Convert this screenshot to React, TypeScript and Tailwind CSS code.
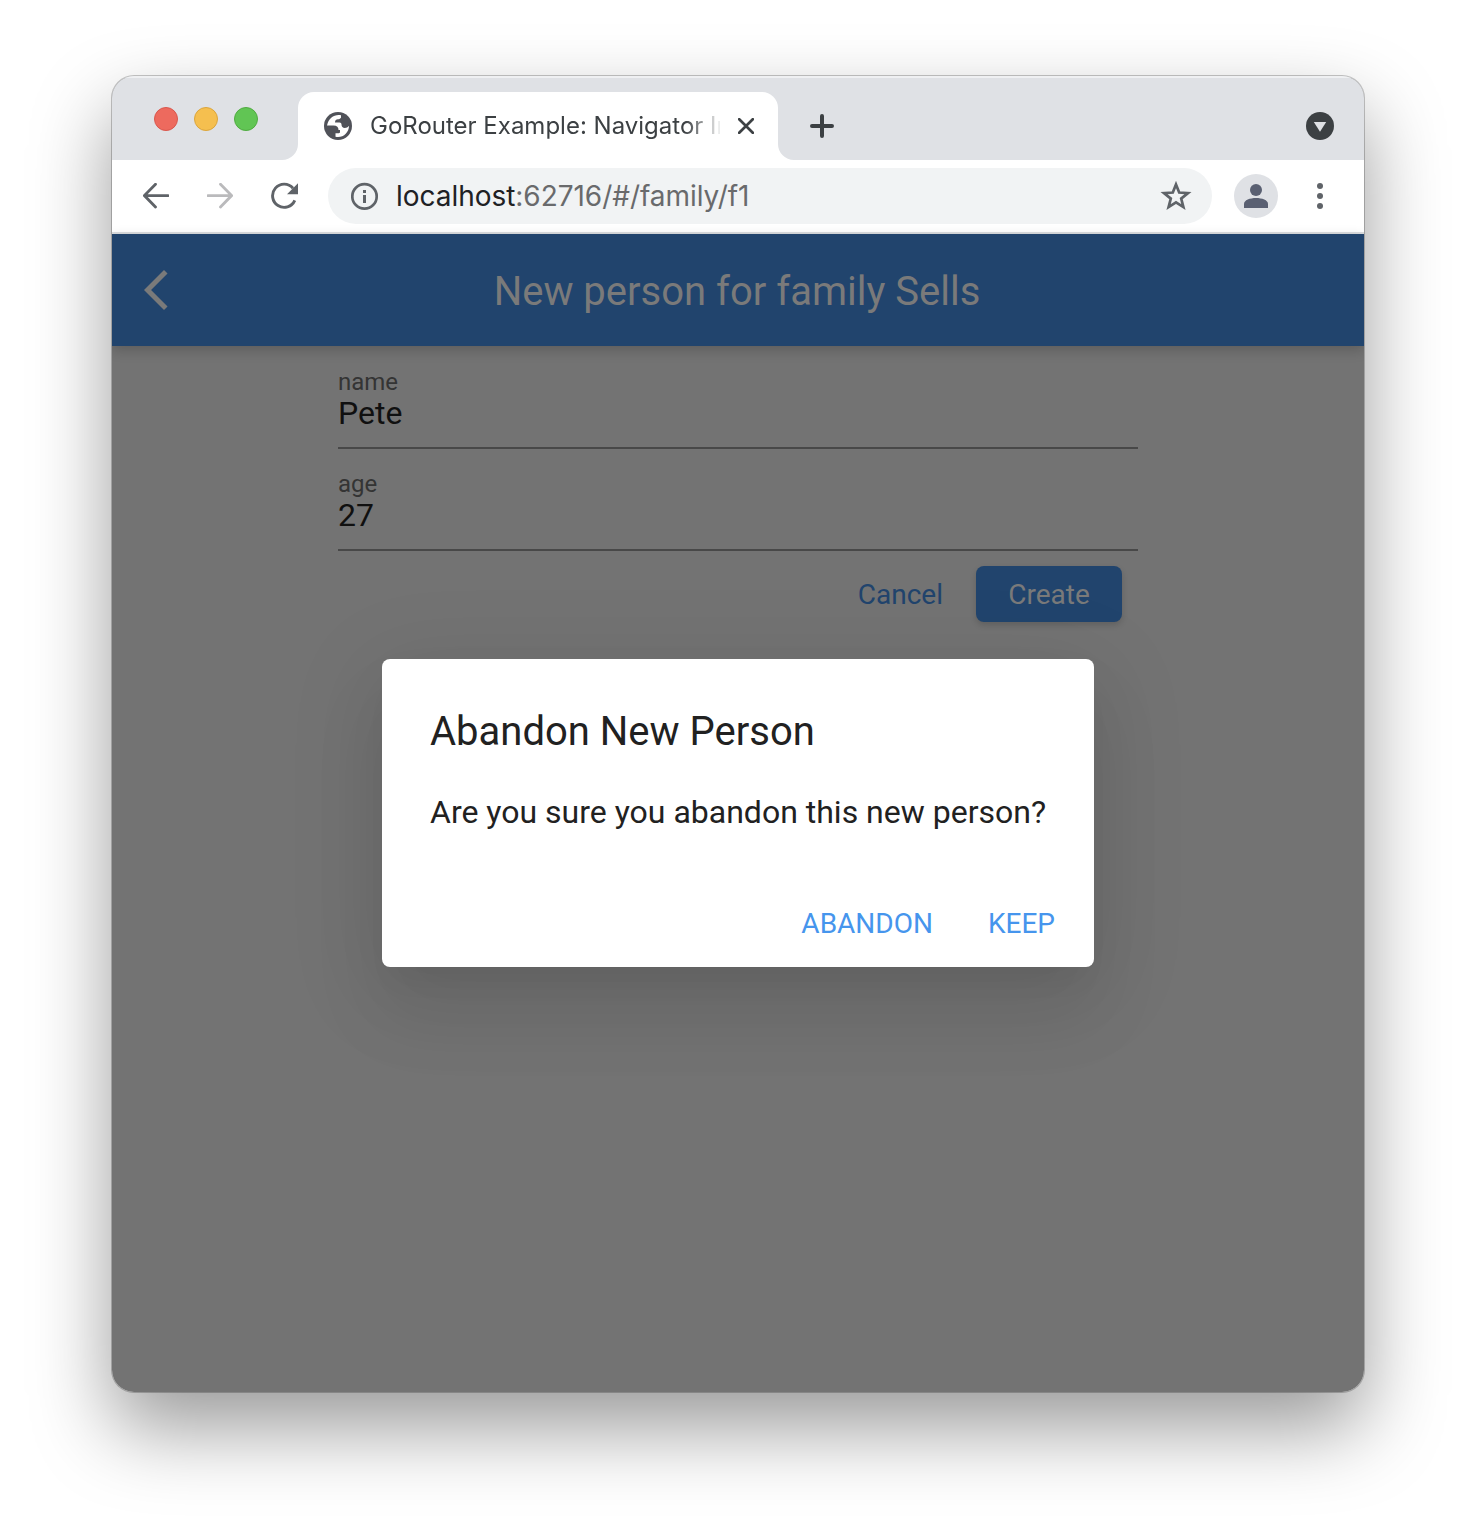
import React from "react";
import { MdArrowBackIosNew } from "react-icons/md";

function TabStrip() {
  return (
    <div className="flex h-[84px] bg-[#dfe1e5] shadow-[inset_0_2px_0_#eff0f2]">
      <div className="flex w-[186px] gap-4 pl-[42px] pt-[31px]">
        <span className="size-6 rounded-full border border-[#d9574d] bg-[#ed6a5e]" />
        <span className="size-6 rounded-full border border-[#dba53c] bg-[#f5bf4f]" />
        <span className="size-6 rounded-full border border-[#50ab41] bg-[#61c554]" />
      </div>
      <div className="relative mt-4 flex w-[480px] items-center rounded-t-2xl bg-white pl-[26px]">
        <svg className="absolute -left-4 bottom-0 size-4" viewBox="0 0 16 16">
          <path d="M16 0v16H0A16 16 0 0 0 16 0Z" fill="#fff" />
        </svg>
        <svg className="absolute -right-4 bottom-0 size-4" viewBox="0 0 16 16">
          <path d="M0 0v16h16A16 16 0 0 1 0 0Z" fill="#fff" />
        </svg>
        <svg className="size-7 shrink-0" viewBox="0 0 28 28">
          <circle cx="14" cy="14" r="14" fill="#505259" />
          <path
            d="M17 3.200C10.500 2 4.500 6 3 13.500h6.500c3.500 0 5 1.500 5 4.500H16v2.500c-1 .9-2.500.9-4.500.8v3.500C18.500 26.500 25 21 25 13.800c-1.200 1.500-2.600 2.200-4.200 2.200-2.100 0-3.300-1.300-3.300-3.500 0-1.300-.8-2-2-2H11c0-2.200 1.200-3.200 3-3.200 1.600 0 2.300-.8 3-1.600Z"
            fill="#fff"
          />
        </svg>
        <span className="ml-[18px] w-[350px] overflow-hidden whitespace-nowrap font-['Inter',sans-serif] text-[24px] leading-8 text-[#3c4043] [mask-image:linear-gradient(to_right,#000_90%,transparent_101%)]">
          GoRouter Example: Navigator Integration
        </span>
        <svg className="ml-[18px] size-4 shrink-0" viewBox="0 0 16 16" stroke="#3c4043" strokeWidth="2.700" strokeLinecap="round">
          <path d="m1.200 1.200 13.600 13.600m0-13.600L1.200 14.800" />
        </svg>
      </div>
      <svg className="ml-8 mt-[38px] size-6" viewBox="0 0 24 24" stroke="#3c4043" strokeWidth="4" strokeLinecap="round">
        <path d="M12 2v20M2 12h20" />
      </svg>
      <svg className="ml-auto mr-[30px] mt-9 size-7" viewBox="0 0 28 28">
        <circle cx="14" cy="14" r="14" fill="#3c4043" />
        <path d="M7.800 10h12.400L14 19.800Z" fill="#dfe1e5" />
      </svg>
    </div>
  );
}

function Toolbar() {
  return (
    <div className="flex h-[74px] items-center border-b-2 border-[#dcdee0] bg-white">
      <svg className="ml-[31px] h-[26px] w-[26px]" viewBox="0 0 26 26" fill="none" stroke="#5f6368" strokeWidth="2.800" strokeLinecap="round">
        <path d="M25 12.600H2M12.500 1.200 1.400 12.600l11.100 11.400" />
      </svg>
      <svg className="ml-[38px] h-[26px] w-[26px]" viewBox="0 0 26 26" fill="none" stroke="#bababc" strokeWidth="2.800" strokeLinecap="round">
        <path d="M1 12.600h23M13.500 1.200 24.600 12.600 13.500 24" />
      </svg>
      <svg className="ml-[38px] h-[28px] w-[28px]" viewBox="0 0 28 28">
        <path d="M23.800 18.400A11.600 11.600 0 1 1 22 6.200" fill="none" stroke="#5f6368" strokeWidth="2.900" />
        <path d="M27 1.200v11H16Z" fill="#5f6368" />
      </svg>
      <div className="ml-[29px] flex h-14 w-[884px] items-center rounded-full bg-[#f1f3f4]">
        <svg className="ml-[23px] size-7" viewBox="0 0 28 28">
          <circle cx="13.500" cy="14.400" r="12.200" fill="none" stroke="#5f6368" strokeWidth="2.700" />
          <path d="M12 8h3v3h-3zM12 13h3V21h-3z" fill="#5f6368" />
        </svg>
        <span className="ml-[17px] whitespace-nowrap font-['Inter',sans-serif] text-[28px] leading-8 tracking-[-0.040px] text-[#696a6c]">
          <span className="text-[#202124]">localhost</span>:62716/#/family/f1
        </span>
        <svg className="ml-auto mr-[20px] size-8" viewBox="0 0 32 32">
          <path
            d="m16 4.400 3.200 8.100 8.800.6-6.800 5.500 2.200 8.500L16 22.400l-7.400 4.700 2.200-8.500L4 13.100l8.800-.6Z"
            fill="none"
            stroke="#5f6368"
            strokeWidth="2.700"
          />
        </svg>
      </div>
      <div className="ml-[22px] flex size-11 items-center justify-center rounded-full bg-[#dfe1e5]">
        <svg className="size-6" viewBox="0 0 24 24" fill="#5a6072">
          <circle cx="12" cy="6" r="6" />
          <path d="M0 24v-4c0-4 6-6 12-6s12 2 12 6v4Z" />
        </svg>
      </div>
      <svg className="ml-[39px] h-[26px] w-[6px]" viewBox="0 0 6 26" fill="#5f6368">
        <circle cx="3" cy="3" r="3" />
        <circle cx="3" cy="13" r="3" />
        <circle cx="3" cy="23" r="3" />
      </svg>
    </div>
  );
}

function Field({ label, value }: { label: string; value: string }) {
  return (
    <div className="h-[102px] pt-[22px]">
      <div className="h-[81px] border-b-2 border-[#484848]">
        <div className="text-[24px] leading-7 text-[#343434]">{label}</div>
        <div className="-mt-px text-[32px] leading-9 text-[#101010]">{value}</div>
      </div>
    </div>
  );
}

export default function App() {
  return (
    <div className="h-[1540px] w-[1476px] overflow-hidden bg-white px-28 pt-[76px]">
      <div className="h-[1316px] rounded-[22px] shadow-[0_0_0_1px_rgba(0,0,0,0.22),0_36px_80px_rgba(0,0,0,0.4)]">
        <div className="flex h-full flex-col overflow-hidden rounded-[22px] bg-[#737373]">
          <TabStrip />
          <Toolbar />
          <div className="relative flex-1 font-['Roboto',sans-serif]">
            <header className="relative flex h-28 items-center justify-center bg-[#21446d] shadow-[0_4px_12px_rgba(0,0,0,0.2)]">
              <MdArrowBackIosNew className="absolute left-5 top-8 size-12 text-[#7a7a7a]" />
              <h1 className="pr-0.5 pt-1 text-[40px] leading-none text-[#7a7a7a]">New person for family Sells</h1>
            </header>
            <div className="mx-auto w-[800px]">
              <Field label="name" value="Pete" />
              <Field label="age" value="27" />
              <div className="mt-4 flex items-center justify-end gap-[33px] pr-4 text-[28px]">
                <span className="pt-0.5 text-[#21446d]">Cancel</span>
                <span className="flex h-14 w-[146px] items-center justify-center rounded-lg bg-[#21446d] pt-0.5 text-[#7a7a7a] shadow-[0_3px_6px_rgba(0,0,0,0.16)]">
                  Create
                </span>
              </div>
            </div>
            <div className="absolute left-[270px] top-[425px] h-[308px] w-[712px] rounded-lg bg-white pl-12 pr-[39px] pt-[49px] text-[#212121] shadow-[0_22px_30px_-14px_rgba(0,0,0,0.06),0_48px_76px_6px_rgba(0,0,0,0.06),0_18px_92px_16px_rgba(0,0,0,0.07)]">
              <h2 className="text-[40px] leading-[48px]">Abandon New Person</h2>
              <p className="mt-[38px] whitespace-nowrap text-[32px] leading-[36px]">Are you sure you abandon this new person?</p>
              <div className="mt-[76px] flex justify-end gap-[55px] text-[28px] leading-9 text-[#4695ed]">
                <span>ABANDON</span>
                <span>KEEP</span>
              </div>
            </div>
          </div>
        </div>
      </div>
    </div>
  );
}
